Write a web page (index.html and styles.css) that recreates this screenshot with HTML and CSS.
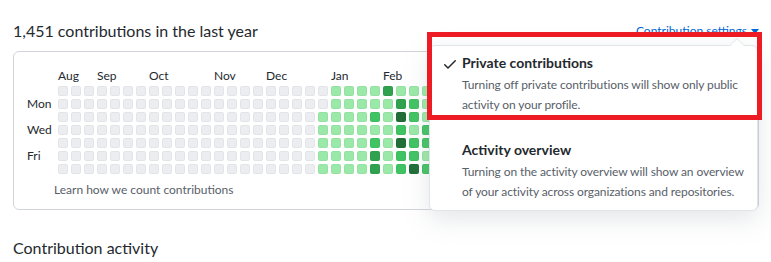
FILE: index.html
```html
<!DOCTYPE html>
<html lang="en">
<head>
<meta charset="utf-8">
<title>Contributions</title>
<link rel="stylesheet" href="styles.css">
</head>
<body>
<div class="page">
  <div class="header">
    <h2 class="title">1,451 contributions in the last year</h2>
    <div class="settings">
      <a class="settings-link" href="#">Contribution settings<svg class="caret" width="8" height="5" viewBox="0 0 8 5"><path d="M0 0h8L4 5z" fill="currentColor"/></svg></a>
      <div class="menu">
        <div class="menu-item">
          <svg class="check" width="16" height="16" viewBox="0 0 16 16"><path fill="currentColor" d="M13.78 4.22a.75.75 0 010 1.06l-7.25 7.25a.75.75 0 01-1.06 0L2.22 9.28a.75.75 0 011.06-1.06L6 10.94l6.72-6.72a.75.75 0 011.06 0z"/></svg>
          <div class="item-title">Private contributions</div>
          <div class="item-desc">Turning off private contributions will show only public activity on your profile.</div>
        </div>
        <div class="menu-item second">
          <div class="item-title">Activity overview</div>
          <div class="item-desc">Turning on the activity overview will show an overview of your activity across organizations and repositories.</div>
        </div>
      </div>
      <div class="highlight"></div>
    </div>
  </div>
  <div class="card">
    <div class="graph">
      <div class="months">
        <span class="m" style="grid-column:1">Aug</span>
        <span class="m" style="grid-column:4">Sep</span>
        <span class="m" style="grid-column:8">Oct</span>
        <span class="m" style="grid-column:13">Nov</span>
        <span class="m" style="grid-column:17">Dec</span>
        <span class="m" style="grid-column:22">Jan</span>
        <span class="m" style="grid-column:26">Feb</span>
        <span class="m" style="grid-column:30">Mar</span>
      </div>
      <div class="body">
        <div class="days">
          <span></span><span>Mon</span><span></span><span>Wed</span><span></span><span>Fri</span><span></span>
        </div>
        <div class="cells" id="cells"></div>
      </div>
    </div>
    <div class="learn">Learn how we count contributions</div>
  </div>
  <h2 class="activity">Contribution activity</h2>
</div>
<script src="script.js"></script>
</body>
</html>
```

FILE: styles.css
```css
* { box-sizing: border-box; }
body {
  margin: 0;
  background: #fff;
  font-family: Lato, "Noto Sans", sans-serif;
  color: #24292e;
}
.page {
  width: 759px;
  padding: 19px 0 0 13px;
}
.header {
  display: flex;
  justify-content: space-between;
  align-items: center;
  height: 24px;
  margin-bottom: 8px;
}
.title {
  margin: 0;
  font-size: 16px;
  font-weight: 400;
  line-height: 24px;
}
.settings { position: relative; }
.settings-link {
  display: flex;
  align-items: center;
  gap: 4px;
  color: #0366d6;
  font-size: 12px;
  line-height: 18px;
  text-decoration: none;
}
.caret { display: block; }
.menu {
  position: absolute;
  top: 23px;
  right: 1px;
  width: 329px;
  height: 166px;
  background: #fff;
  border: 1px solid #e1e4e8;
  border-radius: 6px;
  box-shadow: 0 8px 24px rgba(149,157,165,0.25);
  padding: 7px 2px 0 32px;
  z-index: 2;
}
.menu::before {
  content: "";
  position: absolute;
  top: -8px;
  right: 12px;
  border: 8px solid transparent;
  border-top: 0;
  border-bottom-color: #e1e4e8;
}
.menu::after {
  content: "";
  position: absolute;
  top: -7px;
  right: 13px;
  border: 7px solid transparent;
  border-top: 0;
  border-bottom-color: #fff;
}
.menu-item { position: relative; }
.menu-item.second { margin-top: 25px; }
.check {
  position: absolute;
  left: -20px;
  top: 3px;
  color: #24292e;
}
.item-title {
  font-size: 14px;
  font-weight: 700;
  line-height: 20px;
  margin-bottom: 2px;
  color: #24292e;
}
.item-desc {
  font-size: 12px;
  line-height: 20px;
  letter-spacing: -0.1px;
  color: #586069;
}
.highlight {
  position: absolute;
  top: 10px;
  right: -3px;
  width: 335px;
  height: 88px;
  border: 5px solid #ed1c24;
  z-index: 3;
}
.card {
  width: 746px;
  height: 159px;
  border: 1px solid #d1d5da;
  border-radius: 6px;
  padding: 16px 0 0 13px;
  overflow: hidden;
}
.graph { display: flex; flex-direction: column; gap: 3px; }
.months {
  display: grid;
  grid-template-columns: repeat(54, 13px);
  margin-left: 31px;
  height: 15px;
  font-size: 12px;
  line-height: 15px;
  color: #24292e;
}
.m { white-space: nowrap; }
.body { display: flex; }
.days {
  width: 31px;
  display: grid;
  grid-template-rows: repeat(7, 10px);
  row-gap: 3px;
  font-size: 12px;
  line-height: 10px;
  color: #24292e;
}
.days span { line-height: 10px; }
.cells {
  display: grid;
  grid-auto-flow: column;
  grid-template-rows: repeat(7, 10px);
  grid-auto-columns: 10px;
  gap: 3px;
}
.c {
  width: 10px;
  height: 10px;
  border-radius: 2px;
  background: #ebedf0;
  outline: 1px solid rgba(27,31,35,0.04);
  outline-offset: -1px;
}
.l1 { background: #9be9a8; }
.l2 { background: #40c463; }
.l3 { background: #30a14e; }
.l4 { background: #216e39; }
.learn {
  margin: 7px 0 0 27px;
  font-size: 12px;
  line-height: 18px;
  color: #586069;
}
.activity {
  margin: 26px 0 0;
  font-size: 16px;
  font-weight: 400;
  line-height: 24px;
}
```

FILE: script.js
```js
var data = {
  20: [0,0,1,1,1,1,1],
  21: [1,1,1,1,1,1,1],
  22: [1,1,1,1,1,1,1],
  23: [1,1,1,1,1,1,1],
  24: [1,1,2,1,2,3,3],
  25: [3,1,1,1,1,1,1],
  26: [1,3,4,2,4,2,2],
  27: [1,2,2,1,2,2,4],
  28: [1,1,1,2,2,1,2]
};
var box = document.getElementById('cells');
var html = '';
for (var w = 0; w < 53; w++) {
  for (var d = 0; d < 7; d++) {
    var lv = 0;
    if (data[w]) lv = data[w][d];
    else if (w > 28) lv = (w + d) % 3 === 0 ? 2 : 1;
    html += '<i class="c' + (lv ? ' l' + lv : '') + '"></i>';
  }
}
box.innerHTML = html;
```
